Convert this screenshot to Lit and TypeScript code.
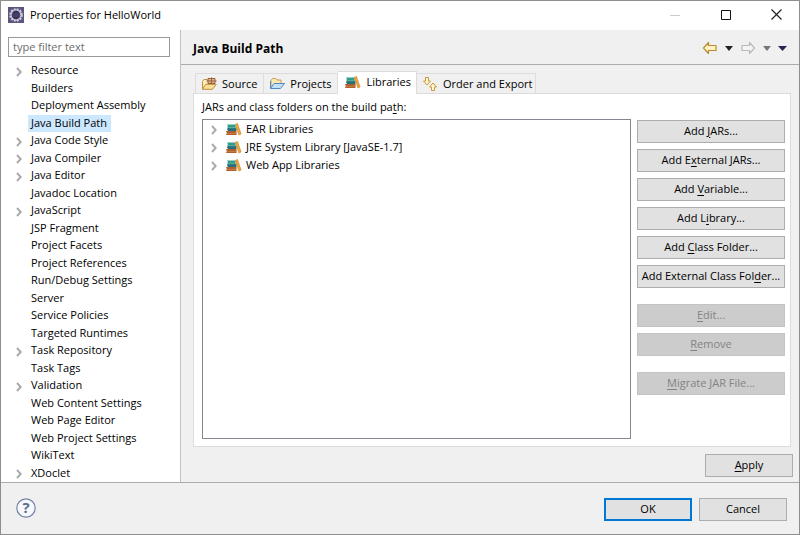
import { LitElement, html, css, svg, nothing, TemplateResult } from "lit";
import { customElement, state } from "lit/decorators.js";
import { classMap } from "lit/directives/class-map.js";

interface PageItem {
  label: string;
  children?: boolean;
}

const PAGES: PageItem[] = [
  { label: "Resource", children: true },
  { label: "Builders" },
  { label: "Deployment Assembly" },
  { label: "Java Build Path" },
  { label: "Java Code Style", children: true },
  { label: "Java Compiler", children: true },
  { label: "Java Editor", children: true },
  { label: "Javadoc Location" },
  { label: "JavaScript", children: true },
  { label: "JSP Fragment" },
  { label: "Project Facets" },
  { label: "Project References" },
  { label: "Run/Debug Settings" },
  { label: "Server" },
  { label: "Service Policies" },
  { label: "Targeted Runtimes" },
  { label: "Task Repository", children: true },
  { label: "Task Tags" },
  { label: "Validation", children: true },
  { label: "Web Content Settings" },
  { label: "Web Page Editor" },
  { label: "Web Project Settings" },
  { label: "WikiText" },
  { label: "XDoclet", children: true },
];

const LIBRARIES = ["EAR Libraries", "JRE System Library [JavaSE-1.7]", "Web App Libraries"];

// "&" marks the mnemonic letter that follows it.
const ACTIONS: { label: string; disabled?: boolean }[][] = [
  [
    { label: "Add &JARs..." },
    { label: "Add E&xternal JARs..." },
    { label: "Add &Variable..." },
    { label: "Add L&ibrary..." },
    { label: "Add &Class Folder..." },
    { label: "Add External Class Fol&der..." },
  ],
  [
    { label: "&Edit...", disabled: true },
    { label: "&Remove", disabled: true },
  ],
  [{ label: "&Migrate JAR File...", disabled: true }],
];

const mnemonic = (text: string) => {
  const at = text.indexOf("&");
  return at < 0 ? text : html`${text.slice(0, at)}<u>${text[at + 1]}</u>${text.slice(at + 2)}`;
};

const icon = (body: TemplateResult<2>, size = 16) =>
  html`<svg class="icon" width=${size} height=${size} viewBox="0 0 16 16" aria-hidden="true">${body}</svg>`;

const chevron = svg`<path d="M6 5 9.700 9 6 13" fill="none" stroke="#a9a9a9" stroke-width="1.900"/>`;

const books = svg`
  <path d="M1 3.500H9.500v3H1l1-1.500z" fill="#2f9c8c"/>
  <path d="M2 6.500h8.500V10H2l-1-1.700z" fill="#256f7c"/>
  <path d="M2.500 6.500H10v.7H2.500z" fill="#5dbb9d"/>
  <path d="M0 10h10.500v4H0l.8-2z" fill="#b0602f"/>
  <path d="M1 12h9.500v.7H1z" fill="#d08a48"/>
  <path d="m9.300 3.300 2.200-.8L15.100 13l-2.300 1z" fill="#eda73a" stroke="#c9822a" stroke-width=".6"/>`;

const folderShape = (line: string, back: string, front: string) => svg`
  <path d="M1.500 13V5.500L3 3.500h3L7.500 5h5v3" fill=${back} stroke=${line}/>
  <path d="m1.500 13.300 3.200-5h10.500l-3.700 5z" fill=${front} stroke=${line} stroke-linejoin="round"/>`;

const sourceIcon = svg`
  ${folderShape("#c08d3c", "#fdeebd", "#fbdf98")}
  <path d="M7 2.500h7v5H7z" fill="#e2b88d" stroke="#95603a"/>
  <path d="M10.500 1.500V8M5.500 5h10" stroke="#95603a"/>`;

const projectIcon = svg`
  <path d="M2 12.500V4.500L3.500 2.500h3L8 4h4v3.500" fill="#fbeab0" stroke="#c9a04e"/>
  <path d="m1.500 12.500 3.500-5h10.500l-4 5z" fill="#c4e0fa" stroke="#5487c8" stroke-linejoin="round"/>
  <path d="M1.500 12V5" stroke="#5487c8"/>`;

const orderIcon = svg`
  <path d="M3.500 1.500h3V5h2L5 9 1.500 5h2z" fill="#fff6d2" stroke="#c9993c"/>
  <path d="M9.500 14.500h3V11h2L11 7l-3.500 4h2z" fill="#fff6d2" stroke="#c9993c"/>`;

const arrow = (line: string, fill: string) =>
  svg`<path d="M1.500 8 6.500 2.500V5.500H14v5H6.500v3z" fill=${fill} stroke=${line} stroke-width="1.200" stroke-linejoin="round"/>`;

const appIcon = svg`
  <path d="M0 0h16v16H0z" fill="#5c5580"/>
  <circle cx="8" cy="8" r="5.900" fill="none" stroke="#cfcbd8" stroke-width="1.800" stroke-dasharray="2 1.089"/>
  <circle cx="8" cy="8" r="5.400" fill="#d8d5df"/>
  <circle cx="8" cy="8" r="4.400" fill="#37325a"/>
  <path d="M4 7h8M4 9h8" stroke="#57507c" stroke-width=".8"/>`;

@customElement("app-root")
export class AppRoot extends LitElement {
  @state() private page = "Java Build Path";
  @state() private tab = "Libraries";

  static styles = css`
    :host {
      display: flex;
      flex-direction: column;
      box-sizing: border-box;
      min-height: 100vh;
      border: 1px solid #8e8e8e;
      background: #f0f0f0;
      color: #000;
      font: 11px/16px "Open Sans", "Noto Sans", sans-serif;
    }
    * {
      box-sizing: border-box;
    }
    button,
    input {
      font: inherit;
      color: inherit;
      margin: 0;
      border-radius: 0;
    }
    u {
      text-underline-offset: 2px;
    }
    .icon {
      display: block;
      flex: none;
    }
    .titlebar {
      display: flex;
      align-items: center;
      height: 29px;
      padding: 0 0 2px 7px;
      gap: 6px;
      background: #fff;
    }
    .title {
      flex: 1;
      margin: 0;
      font-size: 11px;
      font-weight: 400;
    }
    .caption {
      display: grid;
      place-items: center;
      width: 45px;
      height: 27px;
      padding: 0;
      border: 0;
      background: none;
    }
    .body {
      flex: 1;
      display: grid;
      grid-template-columns: 180px 1fr;
    }
    .side {
      display: flex;
      flex-direction: column;
      padding: 7px 10px 0 7px;
      border-right: 1px solid #c4c4c4;
      background: #fff;
    }
    .filter {
      width: 100%;
      height: 20px;
      padding: 0 4px 2px;
      border: 1px solid #999;
      background: #fff;
      outline: 0;
    }
    .filter::placeholder {
      color: #6d6d6d;
    }
    .pages {
      flex: 1;
      display: grid;
      grid-auto-rows: 1fr;
      margin: 5px 0 0;
      padding: 0;
      list-style: none;
    }
    .page {
      display: flex;
      align-items: center;
      padding-left: 3px;
      gap: 1px;
    }
    .twisty {
      flex: none;
      width: 16px;
    }
    .label {
      padding: 0 4px 1px 3px;
      white-space: nowrap;
      cursor: default;
    }
    .label.current {
      background: #cce8ff;
    }
    .main {
      display: flex;
      flex-direction: column;
      min-width: 0;
    }
    .heading {
      display: flex;
      align-items: center;
      height: 35px;
      padding: 2px 12px 0;
      border-bottom: 1px solid #acacac;
    }
    .heading h2 {
      flex: 1;
      margin: 0;
      padding-top: 2px;
      font-size: 12px;
      font-weight: 700;
    }
    .nav {
      display: flex;
      align-items: center;
      gap: 7px;
    }
    .tool {
      display: block;
      padding: 0;
      border: 0;
      background: none;
    }
    .flip {
      transform: scaleX(-1);
    }
    .content {
      flex: 1;
      display: flex;
      flex-direction: column;
      padding: 6px 6px 5px 12px;
    }
    .tabs {
      display: flex;
      align-items: flex-end;
      padding-left: 2px;
    }
    .tab {
      display: flex;
      align-items: center;
      gap: 5px;
      height: 20px;
      padding: 1px 6px 0 5px;
      border: 1px solid #dcdcdc;
      border-bottom: 0;
      border-left-width: 0;
      background: #f0f0f0;
      white-space: nowrap;
    }
    .tab:first-child {
      border-left-width: 1px;
    }
    .tab:last-child {
      padding-right: 3px;
    }
    .tab.active {
      height: 23px;
      margin-bottom: -1px;
      padding: 0 5px 2px 7px;
      background: #fff;
      z-index: 1;
    }
    .panel {
      flex: 1;
      display: grid;
      grid-template-columns: 1fr 148px;
      grid-template-rows: auto 1fr;
      column-gap: 6px;
      row-gap: 4px;
      margin-right: 2px;
      padding: 5px 5px 7px 8px;
      border: 1px solid #dcdcdc;
      background: #fff;
    }
    .caption-text {
      grid-column: 1 / -1;
    }
    .libraries {
      margin: 0;
      padding: 0 0 0 3px;
      border: 1px solid #828790;
      list-style: none;
    }
    .library {
      display: flex;
      align-items: center;
      height: 18px;
      gap: 4px;
    }
    .actions {
      display: flex;
      flex-direction: column;
      gap: 16px;
      padding-top: 1px;
    }
    .group {
      display: flex;
      flex-direction: column;
      gap: 6px;
    }
    .push {
      height: 23px;
      padding: 0 0 2px;
      border: 1px solid #adadad;
      background: #e1e1e1;
      white-space: nowrap;
    }
    .push:disabled {
      border-color: #c4c4c4;
      background: #ccc;
      color: #838383;
    }
    .push.wide {
      width: 88px;
    }
    .push.default {
      border: 2px solid #0078d7;
    }
    .apply {
      display: flex;
      justify-content: flex-end;
      padding-top: 7px;
    }
    .footer {
      display: flex;
      align-items: flex-start;
      gap: 7px;
      padding: 15px 12px 13px 15px;
      border-top: 1px solid #acacac;
    }
    .help {
      margin-right: auto;
      padding: 0;
      border: 0;
      background: none;
    }
    .help-mark {
      font: 700 15px "Open Sans", sans-serif;
      fill: #5d6d92;
    }
  `;

  private tabs: { name: string; art: TemplateResult<2> }[] = [
    { name: "Source", art: sourceIcon },
    { name: "Projects", art: projectIcon },
    { name: "Libraries", art: books },
    { name: "Order and Export", art: orderIcon },
  ];

  private twisty(open = true) {
    return html`<span class="twisty">${open ? icon(chevron) : nothing}</span>`;
  }

  private dropdown(color: string, size = 8) {
    return html`<svg class="icon" width=${size} height="5" viewBox="0 0 8 4" preserveAspectRatio="none" aria-hidden="true">
      <path d="M0 0h8L4 4z" fill=${color} />
    </svg>`;
  }

  private titlebar() {
    return html`<header class="titlebar">
      ${icon(appIcon)}
      <h1 class="title">Properties for HelloWorld</h1>
      <button class="caption" aria-label="Minimize" disabled>
        <svg width="10" height="10"><path d="M0 5.500h10" stroke="#ccc" /></svg>
      </button>
      <button class="caption" aria-label="Maximize">
        <svg width="10" height="10"><path d="M.5.5h9v9h-9z" fill="none" stroke="#111" /></svg>
      </button>
      <button class="caption" aria-label="Close">
        <svg width="11" height="11"><path d="m.5.5 10 10m0-10-10 10" stroke="#222" stroke-width="1.200" /></svg>
      </button>
    </header>`;
  }

  private side() {
    return html`<nav class="side" aria-label="Property pages">
      <input class="filter" type="text" placeholder="type filter text" aria-label="Filter" />
      <ul class="pages" role="tree">
        ${PAGES.map(
          (p) => html`<li class="page" role="treeitem" aria-selected=${p.label === this.page}>
            ${this.twisty(!!p.children)}
            <span class=${classMap({ label: true, current: p.label === this.page })} @click=${() => (this.page = p.label)}
              >${p.label}</span
            >
          </li>`
        )}
      </ul>
    </nav>`;
  }

  private panel() {
    return html`<section class="panel" role="tabpanel" aria-label=${this.tab}>
      <div class="caption-text" id="lib-caption">${mnemonic("JARs and class folders on the build pa&th:")}</div>
      <ul class="libraries" role="tree" aria-labelledby="lib-caption">
        ${LIBRARIES.map(
          (name) => html`<li class="library" role="treeitem">${this.twisty()}${icon(books)}<span>${name}</span></li>`
        )}
      </ul>
      <div class="actions">
        ${ACTIONS.map(
          (group) => html`<div class="group">
            ${group.map((a) => html`<button class="push" ?disabled=${a.disabled}>${mnemonic(a.label)}</button>`)}
          </div>`
        )}
      </div>
    </section>`;
  }

  render() {
    return html`
      ${this.titlebar()}
      <div class="body">
        ${this.side()}
        <main class="main">
          <div class="heading">
            <h2>Java Build Path</h2>
            <div class="nav">
              <button class="tool" aria-label="Back">${icon(arrow("#bb8a2e", "#fff3c4"))}</button>
              <button class="tool" aria-label="Back history">${this.dropdown("#222")}</button>
              <button class="tool flip" aria-label="Forward" disabled>${icon(arrow("#b9b9b9", "#f4f4f4"))}</button>
              <button class="tool" aria-label="Forward history" disabled>${this.dropdown("#777")}</button>
              <button class="tool" aria-label="View menu">${this.dropdown("#2c2450", 9)}</button>
            </div>
          </div>
          <div class="content">
            <div class="tabs" role="tablist">
              ${this.tabs.map(
                (t) => html`<button
                  class=${classMap({ tab: true, active: t.name === this.tab })}
                  role="tab"
                  aria-selected=${t.name === this.tab}
                  @click=${() => (this.tab = t.name)}
                >
                  ${icon(t.art)}<span>${t.name}</span>
                </button>`
              )}
            </div>
            ${this.panel()}
            <div class="apply"><button class="push wide">${mnemonic("&Apply")}</button></div>
          </div>
        </main>
      </div>
      <footer class="footer">
        <button class="help" aria-label="Help">
          <svg class="icon" width="20" height="20" viewBox="0 0 20 20">
            <circle cx="10" cy="10" r="9.200" fill="#f7f8fb" stroke="#7483a3" stroke-width="1.200" />
            <text class="help-mark" x="10" y="15" text-anchor="middle">?</text>
          </svg>
        </button>
        <button class="push wide default">OK</button>
        <button class="push wide">Cancel</button>
      </footer>
    `;
  }
}
